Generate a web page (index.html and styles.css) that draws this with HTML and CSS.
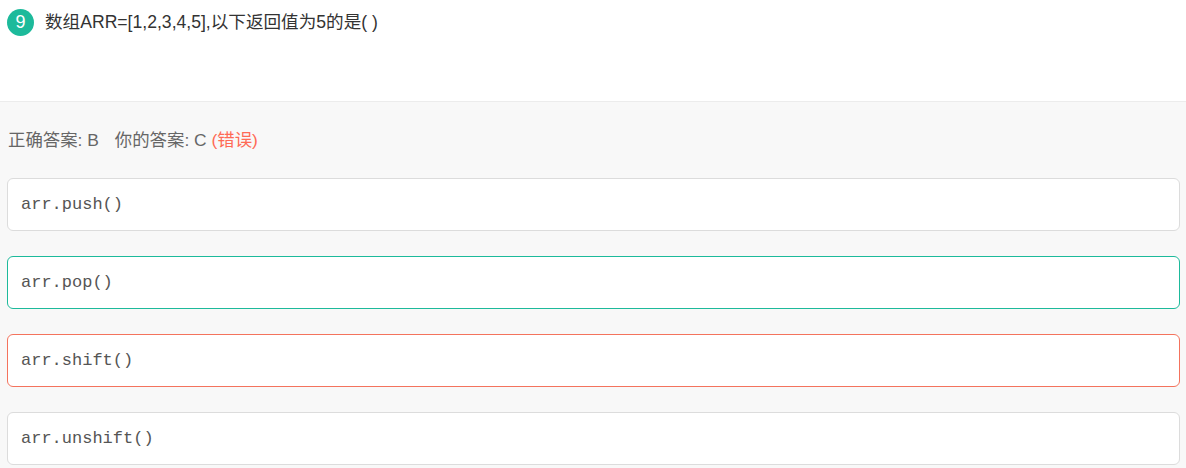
FILE: index.html
```html
<!DOCTYPE html>
<html lang="zh">
<head>
<meta charset="utf-8">
<title>题目 9</title>
<link rel="stylesheet" href="styles.css">
</head>
<body>
  <div class="question">
    <span class="badge">9</span>
    <span class="q-text">数组ARR=[1,2,3,4,5],以下返回值为5的是( )</span>
  </div>
  <div class="answers">
    <div class="result">正确答案: B<span class="sp"></span>你的答案: C <span class="wrong">(错误)</span></div>
    <div class="options">
      <div class="option">arr.push()</div>
      <div class="option correct">arr.pop()</div>
      <div class="option chosen">arr.shift()</div>
      <div class="option">arr.unshift()</div>
    </div>
  </div>
</body>
</html>
```
FILE: styles.css
```css
html, body {
  margin: 0;
  padding: 0;
  background: #ffffff;
}
body {
  font-family: "Liberation Sans", "Noto Sans CJK SC", sans-serif;
  color: #333333;
}
.question {
  display: flex;
  align-items: flex-start;
  gap: 11px;
  height: 102px;
  padding: 9px 7px 0 7px;
  box-sizing: border-box;
  border-bottom: 1px solid #ececec;
}
.badge {
  flex: none;
  width: 27px;
  height: 27px;
  border-radius: 50%;
  background: #1dba9b;
  color: #ffffff;
  font-size: 18px;
  line-height: 27px;
  text-align: center;
}
.q-text {
  font-size: 17.6px;
  line-height: 27px;
  color: #333333;
}
.answers {
  background: #f8f8f8;
  padding: 26px 6px 0 7px;
  height: 366px;
  box-sizing: border-box;
}
.result {
  font-size: 17.4px;
  line-height: 24px;
  color: #666666;
  padding-left: 1px;
}
.sp {
  display: inline-block;
  width: 16px;
}
.wrong {
  color: #ff6a55;
}
.options {
  display: flex;
  flex-direction: column;
  gap: 25px;
  margin-top: 26px;
}
.option {
  height: 53px;
  box-sizing: border-box;
  background: #ffffff;
  border: 1px solid #dcdcdc;
  border-radius: 6px;
  padding: 0 13px;
  display: flex;
  align-items: center;
  font-family: "Liberation Mono", monospace;
  font-size: 17px;
  color: #555555;
}
.option.correct {
  border-color: #1dba9b;
}
.option.chosen {
  border-color: #f4735d;
}
```
